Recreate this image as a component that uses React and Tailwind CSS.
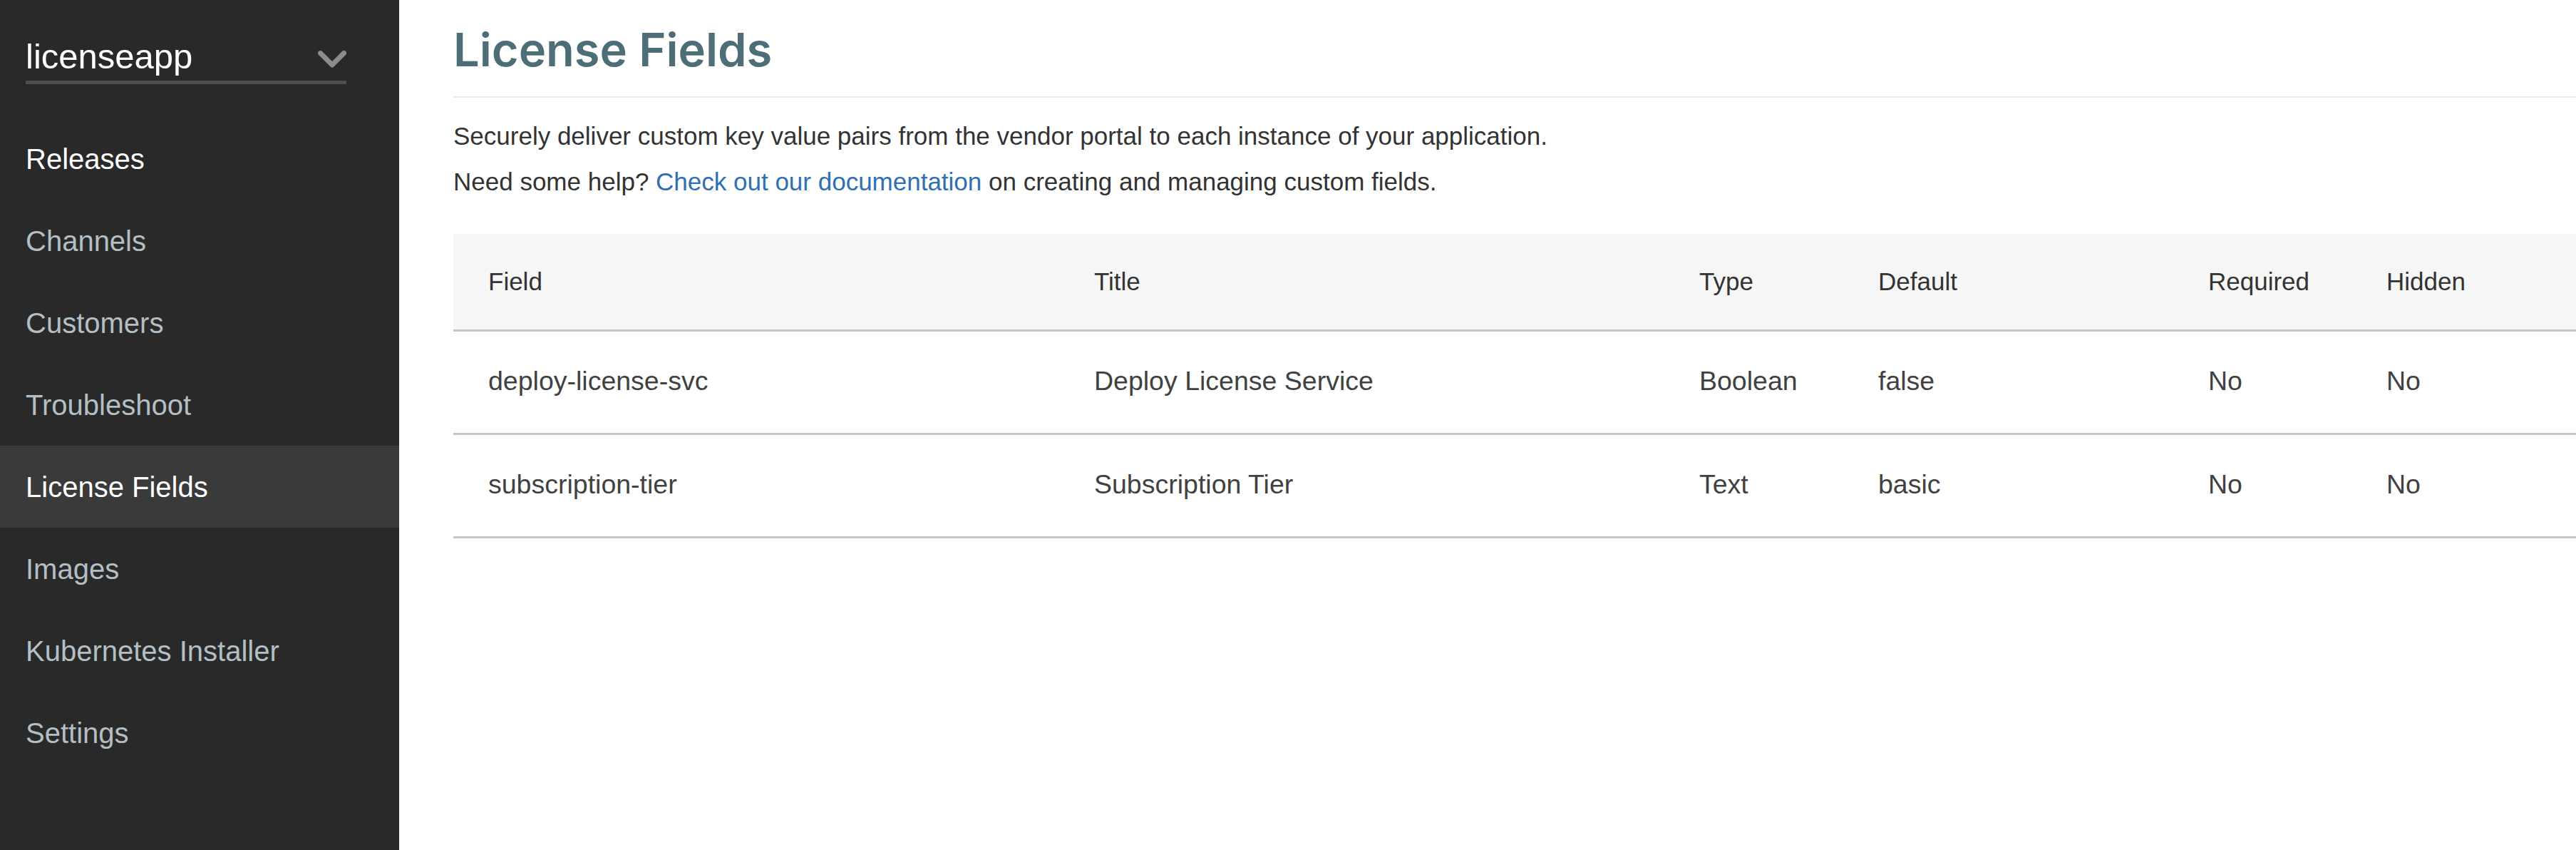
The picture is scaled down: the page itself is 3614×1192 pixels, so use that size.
import React from "react";

const navItems = [
  { label: "Releases", color: "text-white" },
  { label: "Channels" },
  { label: "Customers" },
  { label: "Troubleshoot" },
  { label: "License Fields", active: true },
  { label: "Images" },
  { label: "Kubernetes Installer" },
  { label: "Settings" },
];

const rows = [
  ["deploy-license-svc", "Deploy License Service", "Boolean", "false", "No", "No"],
  ["subscription-tier", "Subscription Tier", "Text", "basic", "No", "No"],
];

const headers = ["Field", "Title", "Type", "Default", "Required", "Hidden"];
const colW = ["w-[850px]", "w-[849px]", "w-[251px]", "w-[463px]", "w-[250px]", "w-[315px]"];

export default function App() {
  return (
    <div className="flex min-h-screen w-full bg-white font-['Liberation_Sans',Arial,sans-serif]">
      <aside className="w-[560px] shrink-0 bg-[#292929]">
        <div className="pl-[36px] pt-[55px] mb-[47px]">
          <div className="flex w-[450px] items-center justify-between border-b-[5px] border-[#4d4d4d] pb-[9px]">
            <span className="text-[49px] leading-none text-white">licenseapp</span>
            <svg width="40" height="25" viewBox="0 0 40 25" className="mt-[8px]">
              <polyline
                points="3.5,3.5 20,20 36.5,3.5"
                fill="none"
                stroke="#8c8c8c"
                strokeWidth="7"
                strokeLinecap="round"
                strokeLinejoin="round"
              />
            </svg>
          </div>
        </div>
        <nav className="flex flex-col">
          {navItems.map((item) => (
            <div
              key={item.label}
              className={
                "flex h-[115px] items-center pl-[36px] text-[40px] " +
                (item.active
                  ? "bg-[#3a3a3a] text-white"
                  : item.color === "text-white"
                  ? "text-white"
                  : "text-[#b3bfc4]")
              }
            >
              {item.label}
            </div>
          ))}
        </nav>
      </aside>

      <main className="flex-1 pl-[76px]">
        <div className="border-b-[2px] border-[#e7ecee] pb-[26px] pt-[31px]">
          <h1 className="font-['Inter',sans-serif] text-[65px] font-semibold leading-[78px] text-[#4e6e77]">
            License Fields
          </h1>
        </div>
        <div className="mt-[22px] text-[35px] leading-[64px] text-[#333333]">
          <p>Securely deliver custom key value pairs from the vendor portal to each instance of your application.</p>
          <p>
            Need some help? <a className="text-[#2f6fb4]">Check out our documentation</a> on creating and managing
            custom fields.
          </p>
        </div>

        <div className="mt-[41px] w-[2978px]">
          <div className="flex h-[137px] items-center border-b-[3px] border-[#c4c7ca] bg-[#f6f6f6] text-[35px] text-[#333333]">
            {headers.map((h, i) => (
              <div key={h} className={colW[i] + " shrink-0 pl-[49px]"}>
                {h}
              </div>
            ))}
          </div>
          {rows.map((r, ri) => (
            <div
              key={ri}
              className="flex h-[145px] items-center border-b-[3px] border-[#c4c7ca] pb-[4px] text-[37.5px] text-[#414141]"
            >
              {r.map((c, i) => (
                <div key={i} className={colW[i] + " shrink-0 pl-[49px]"}>
                  {c}
                </div>
              ))}
            </div>
          ))}
        </div>
      </main>
    </div>
  );
}
